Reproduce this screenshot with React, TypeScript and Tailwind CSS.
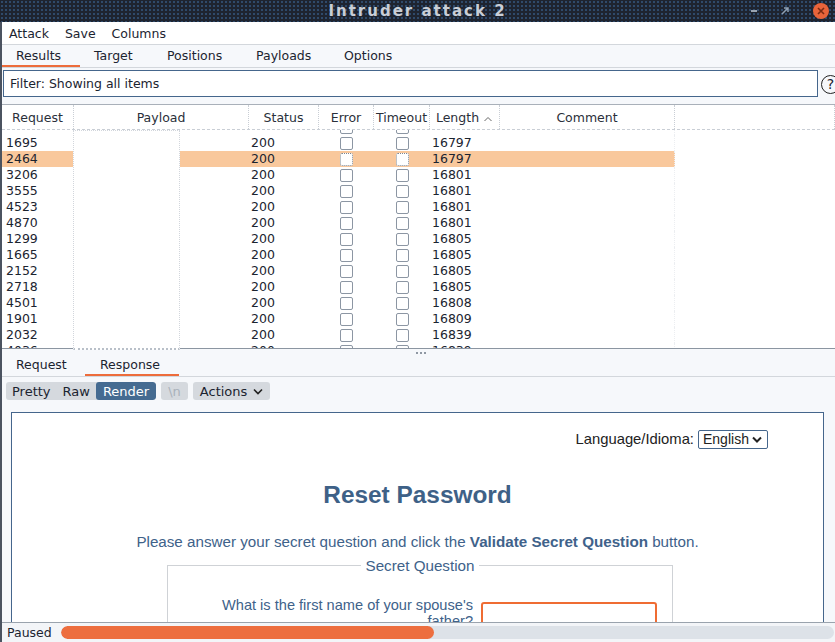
import React from "react";

const ui = { fontFamily: '"DejaVu Sans", sans-serif' };
const web = { fontFamily: '"Liberation Sans", Arial, sans-serif' };

const rows = [
  ["", ""],
  ["1695", "16797"],
  ["2464", "16797"],
  ["3206", "16801"],
  ["3555", "16801"],
  ["4523", "16801"],
  ["4870", "16801"],
  ["1299", "16805"],
  ["1665", "16805"],
  ["2152", "16805"],
  ["2718", "16805"],
  ["4501", "16808"],
  ["1901", "16809"],
  ["2032", "16839"],
  ["4036", "16839"],
];

const cols = "grid grid-cols-[72px_175px_70px_55px_56px_70px_175px_1fr]";

const Check = ({ dotted }: { dotted?: boolean }) => (
  <span
    className={
      "block w-[13px] h-[13px] rounded-[2px] bg-white border " +
      (dotted ? "border-dotted border-[#7d8794]" : "border-[#8c96a3]")
    }
  />
);

const TitleBar = () => (
  <div className="h-[22px] grid grid-cols-[1fr_auto_1fr] items-center bg-[#1e2430] bg-[radial-gradient(#2f4a6b_1px,transparent_1px)] bg-[size:4px_4px]">
    <div />
    <div className="text-[15px] font-bold tracking-[2px] text-[#c9ced6]" style={ui}>
      Intruder attack 2
    </div>
    <div className="flex items-center justify-end gap-[24px] pr-[6px]">
      <span className="block w-[6px] h-[2px] bg-[#9aa4b1]" />
      <svg width="8" height="8" viewBox="0 0 8 8">
        <path d="M1 7 L7 1 M3 1 H7 V5" stroke="#8fa0b3" strokeWidth="1.5" fill="none" />
      </svg>
      <span className="flex items-center justify-center w-[16px] h-[16px] rounded-full bg-[#e8643a]">
        <svg width="8" height="8" viewBox="0 0 8 8">
          <path d="M1 1 L7 7 M7 1 L1 7" stroke="#7a2a12" strokeWidth="1.6" />
        </svg>
      </span>
    </div>
  </div>
);

export default function App() {
  return (
    <div className="w-[835px] h-[642px] overflow-hidden bg-white text-[#1b2430] text-[12.5px] flex flex-col" style={ui}>
      <TitleBar />
      <div className="flex-1 flex flex-col border-l-2 border-[#4b5360] relative min-h-0">
        {/* menu */}
        <div className="h-[22px] flex items-center gap-[16px] pl-[7px] pt-[2px] bg-white shrink-0">
          <span>Attack</span>
          <span>Save</span>
          <span>Columns</span>
        </div>
        {/* top tabs */}
        <div className="h-[24px] flex items-end bg-[#f6f8fb] border-y border-[#d3d7dc] shrink-0">
          {[
            ["Results", "w-[78px]"],
            ["Target", "w-[73px]"],
            ["Positions", "w-[89px]"],
            ["Payloads", "w-[88px]"],
            ["Options", "w-[80px]"],
          ].map(([t, w], i) => (
            <div
              key={t}
              className={
                w +
                " h-full flex items-center pl-[14px] pt-[2px] " +
                (i === 0 ? "border-b-2 border-[#ed6c3b]" : "border-b-2 border-transparent")
              }
            >
              {t}
            </div>
          ))}
        </div>
        {/* filter */}
        <div className="h-[37px] flex items-start pt-[2px] pl-[1px] gap-[3px] bg-[#f6f8fb] border-b border-[#a9b0b9] shrink-0 overflow-hidden">
          <div className="w-[815px] shrink-0 h-[27px] flex items-center pl-[6px] pt-[2px] bg-white border border-[#45668c]">
            Filter: Showing all items
          </div>
          <div className="w-[19px] h-[19px] mt-[5px] shrink-0 rounded-full border-[1.5px] border-[#222] flex items-center justify-center text-[14px]">
            ?
          </div>
        </div>
        {/* table */}
        <div className="h-[244px] flex flex-col border-b border-[#8b95a1] bg-white shrink-0 overflow-hidden">
          <div className={cols + " h-[25px] border-b border-dashed border-[#c9ced5] shrink-0"}>
            {["Request", "Payload", "Status", "Error", "Timeout", "Length", "Comment", ""].map((h) => (
              <div
                key={h}
                className="flex items-center justify-center pt-[3px] border-r border-dotted border-[#c9ced5] text-[#2a303a]"
              >
                {h}
                {h === "Length" && (
                  <svg width="10" height="8" viewBox="0 0 10 8" className="ml-[4px]">
                    <path d="M1.5 6 L5 2.5 L8.5 6" stroke="#666" strokeWidth="1" fill="none" />
                  </svg>
                )}
              </div>
            ))}
          </div>
          <div className="flex-1 overflow-hidden">
            <div className="-mt-[11px]">
              {rows.map(([req, len], i) => (
                <div key={i} className={cols + " h-[16px]"}>
                  <div className={"pl-[4px] leading-[16px] " + (i === 2 ? "bg-[#f9c89c]" : "")}>{req}</div>
                  <div className={i === 2 ? "bg-[#f9c89c]" : ""} />
                  <div className={"pl-[2px] leading-[16px] " + (i === 2 ? "bg-[#f9c89c]" : "")}>{i === 0 ? "" : "200"}</div>
                  <div className={"flex items-center justify-center " + (i === 2 ? "bg-[#f9c89c]" : "")}>
                    <Check dotted={i === 2} />
                  </div>
                  <div className={"flex items-center justify-center " + (i === 2 ? "bg-[#f9c89c]" : "")}>
                    <Check dotted={i === 2} />
                  </div>
                  <div className={"pl-[2px] leading-[16px] " + (i === 2 ? "bg-[#f9c89c]" : "")}>{len}</div>
                  <div className={"border-r border-dotted border-[#eceef1] " + (i === 2 ? "bg-[#f9c89c]" : "")} />
                  <div />
                </div>
              ))}
            </div>
          </div>
        </div>
        {/* payload popup over table */}
        <div className="absolute left-[71px] top-[108px] w-[107px] h-[220px] bg-white border border-dotted border-[#d2d6dc] border-b-2 border-b-[#b9c0c9]" />
        {/* splitter dots */}
        <div className="absolute left-[414px] top-[330px] flex gap-[2px]">
          <span className="block w-[2px] h-[2px] bg-[#8f98a3]" />
          <span className="block w-[2px] h-[2px] bg-[#8f98a3]" />
          <span className="block w-[2px] h-[2px] bg-[#8f98a3]" />
        </div>
        {/* lower tabs */}
        <div className="h-[28px] flex items-stretch bg-[#f6f8fb] border-b border-[#d3d7dc] shrink-0">
          <div className="w-[83px] pt-[8px] leading-[16px] pl-[14px] border-b-2 border-transparent">Request</div>
          <div className="w-[94px] pt-[8px] leading-[16px] pl-[15px] border-b-2 border-[#ed6c3b]">Response</div>
        </div>
        {/* toolbar */}
        <div className="h-[28px] flex items-center gap-[5px] pl-[4px] bg-[#f6f8fb] shrink-0 text-[13px]">
          <div className="flex h-[18px] rounded-[3px] overflow-hidden bg-[#d5d9de]">
            <span className="pl-[6px] pr-[6px] pt-[1px] leading-[17px]">Pretty</span>
            <span className="px-[6px] pt-[1px] leading-[17px]">Raw</span>
            <span className="px-[7px] pt-[1px] leading-[17px] bg-[#456b91] text-white rounded-[3px]">Render</span>
          </div>
          <span className="h-[18px] px-[7px] pt-[1px] leading-[17px] rounded-[3px] bg-[#d5d9de] text-[#a9b1ba]">\n</span>
          <span className="h-[18px] pl-[7px] pr-[7px] pt-[1px] flex items-center gap-[6px] rounded-[3px] bg-[#d5d9de]">
            Actions
            <svg width="10" height="7" viewBox="0 0 10 7">
              <path d="M1 1.5 L5 5.5 L9 1.5" stroke="#222" strokeWidth="1.6" fill="none" />
            </svg>
          </span>
        </div>
        {/* render area */}
        <div className="flex-1 min-h-0 overflow-hidden bg-[#f6f8fb] pl-[9px] pr-[11px] pt-[7px]">
          <div className="h-[260px] bg-white border border-[#45668c]" style={web}>
            <div className="flex justify-end items-center gap-[4px] pr-[55px] pt-[15px] text-[14.8px] text-[#222]">
              <span>Language/Idioma:</span>
              <span className="h-[19px] w-[70px] flex items-center justify-between pl-[4px] pr-[5px] border border-[#45668c] rounded-[2px] text-[14px]">
                English
                <svg width="10" height="7" viewBox="0 0 10 7">
                  <path d="M1 1.5 L5 5.5 L9 1.5" stroke="#222" strokeWidth="2" fill="none" />
                </svg>
              </span>
            </div>
            <h1 className="mt-[27px] text-center text-[24.4px] font-bold text-[#3e6187]">Reset Password</h1>
            <p className="mt-[17px] text-center text-[15.2px] text-[#40628a]">
              Please answer your secret question and click the <b>Validate Secret Question</b> button.
            </p>
            <div className="w-[506px] ml-[155px] mt-[3px]">
              <div className="flex items-center text-[15.2px] text-[#40628a]">
                <span className="flex-1 border-t border-[#cfd2d6]" />
                <span className="px-[5px] leading-[18px]">Secret Question</span>
                <span className="flex-1 border-t border-[#cfd2d6]" />
              </div>
              <div className="h-[80px] border-x border-b border-[#cfd2d6] -mt-[9px] flex items-start pt-[31px]">
                <div className="w-[305px] text-right text-[14.6px] leading-[16px] text-[#40628a] pl-[45px]">
                  What is the first name of your spouse's father?
                </div>
                <div className="ml-[8px] mt-[5px] w-[176px] h-[26px] border-2 border-[#ef6c33] rounded-[3px]" />
              </div>
            </div>
          </div>
        </div>
        {/* status */}
        <div className="h-[20px] flex items-center gap-[9px] pl-[5px] pr-[1px] bg-[#f3f5f8] border-t border-[#9aa3ad] shrink-0">
          <span className="pt-[1px]">Paused</span>
          <div className="flex-1 h-[13px] rounded-full bg-[#dde2e8] overflow-hidden">
            <div className="w-[373px] h-full rounded-full bg-[#ed6e3f]" />
          </div>
        </div>
      </div>
    </div>
  );
}
